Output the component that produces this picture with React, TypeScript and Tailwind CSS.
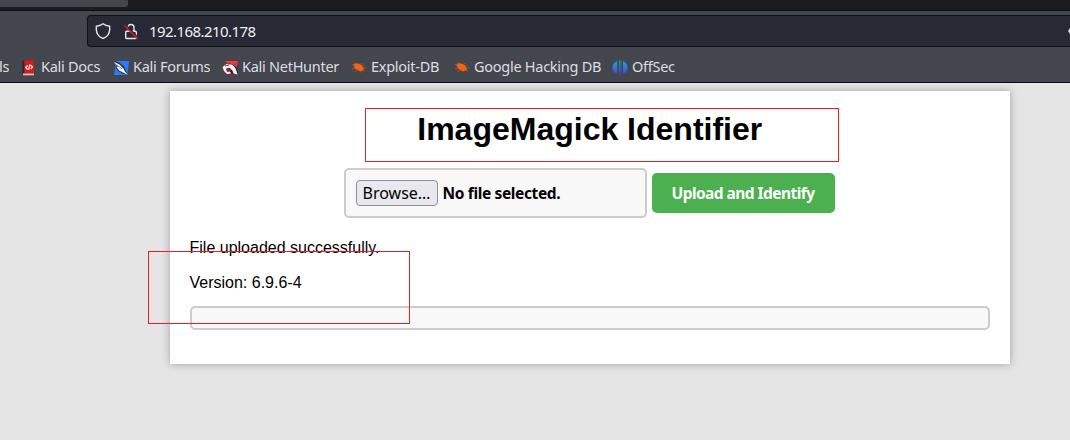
import type { ReactNode } from "react";

function Shield() {
  return (
    <svg className="block size-4" viewBox="0 0 16 16" fill="none" stroke="#e6e6ea" strokeWidth="1.4" strokeLinejoin="round">
      <path d="M8 .8C10 2.300 12.500 3 14.700 3.300V6.500C14.500 11 12 14 8 15.500C4 14 1.500 11 1.300 6.500V3.300C3.500 3 6 2.300 8 .8Z" />
    </svg>
  );
}

function InsecureLock() {
  return (
    <svg className="block h-[17px] w-4" viewBox="0 0 16 17" fill="none" stroke="#e6e6ea" strokeWidth="1.4">
      <path d="M5 5V4.500A3 3 0 0 1 11 4.500V8M3.700 8.200H12.300Q13.300 8.200 13.300 9.200V14.500Q13.300 15.500 12.300 15.500H3.700Q2.700 15.500 2.700 14.500V9.200Q2.700 8.200 3.700 8.200Z" />
      <path d="M2.500 1.500L15.500 15" stroke="#272935" strokeWidth="1.500" />
      <path d="M1.200 2.300L14.800 16.300" stroke="#e2123f" strokeWidth="1.400" />
    </svg>
  );
}

function DocsIcon() {
  return (
    <svg className="block size-4" viewBox="0 0 16 16">
      <path d="M2 .5H13V13.500H2Z" fill="#dc1717" />
      <path d="M1.300 .5H3.300V14H1.300Z" fill="#252940" />
      <path d="M2 13.500H13V15.300H2Z" fill="#ddbdb9" />
      <path d="M6.500 5.500L4.800 7.500L6.500 9.500M9.500 5L11.500 7L9.800 9M8.700 4.500L7.600 10" fill="none" stroke="#fff" strokeWidth="1.200" />
    </svg>
  );
}

function ForumsIcon() {
  return (
    <svg className="block size-4" viewBox="0 0 16 16">
      <path d="M3 1H16L14.500 15H1Z" fill="#267bff" />
      <path d="M0 .5L6 2.500L11 6.500L13 11L15.700 15.300L10 13.500L5 11L2.500 7L4 6Z" fill="#252a35" />
      <path d="M.5 1.500L6.500 4.500L10.500 8.500L12 11.500L15.200 15L10 12.500L6 10.500L3.500 7L5 6.500Z" fill="#f5f5f5" />
      <path d="M4 5L9 9" stroke="#555" strokeWidth=".7" />
    </svg>
  );
}

function HunterIcon() {
  return (
    <svg className="block size-4" viewBox="0 0 16 16">
      <path d="M3 1H16L13.500 13Z" fill="#f33339" />
      <path d="M.5 7L2.500 12L8 15H13L7 10Z" fill="#b31331" />
      <path d="M2.500 8Q6 4 9 5.500Q14 7 14.500 12Q11 13.500 8.500 10.500" fill="none" stroke="#22262b" strokeWidth="3" />
      <path d="M.5 7L4.500 4L9.500 4.500Q13 6 14.500 11L15.500 14.500L11.500 13.500Q10.500 10 8.500 8.500Q6 7 4 9L5 12L8 11.500L9 13.500L5 14L2 11Z" fill="#f4f4f4" />
      <path d="M3 6L7 5" stroke="#222" strokeWidth=".8" />
    </svg>
  );
}

function BugIcon() {
  return (
    <svg className="block size-4" viewBox="0 0 16 16">
      <path d="M2.300 4Q6 2.500 9 4.200Q13 6 12.700 9.500Q11 12 7.500 10.500Q3 9 2.300 4Z" fill="#f2640f" />
      <path d="M3.500 5L1 4.500M5 4L4.500 2.500M9 4.500L11.500 3.300M11.500 6L13.500 5M12.500 8H15.500M12 10L14 11.700M9 11L10 12.500M6 10L3.500 11.500M4 8L1 9" fill="none" stroke="#b5522f" strokeWidth=".8" />
    </svg>
  );
}

function OffSecIcon() {
  return (
    <svg className="block size-4" viewBox="0 0 16 16">
      <defs>
        <linearGradient id="offsec" x1="0" y1="0" x2="0" y2="16" gradientUnits="userSpaceOnUse">
          <stop stopColor="#16b0c8" />
          <stop offset=".5" stopColor="#3474d9" />
          <stop offset="1" stopColor="#6423c8" />
        </linearGradient>
      </defs>
      <path d="M5.200 1V14Q.5 12 .5 7.500Q.5 3 5.200 1ZM6.900 .5H7.700V15.500L6.900 15ZM8.500 .5H9.300V15L8.500 15.500ZM11 1Q15.500 3 15.500 7.500Q15.500 12 11 14Z" fill="url(#offsec)" />
    </svg>
  );
}

function Bookmark({ icon, children, className }: { icon: ReactNode; children: ReactNode; className: string }) {
  return (
    <div className={"flex shrink-0 items-center gap-1 whitespace-nowrap " + className}>
      {icon}
      <span className="-mt-0.5">{children}</span>
    </div>
  );
}

export default function App() {
  return (
    <div className="relative flex h-[440px] w-[1070px] flex-col overflow-hidden bg-[#e5e5e5] font-['Noto_Sans',sans-serif] text-black">
      <div className="h-[10px] shrink-0 bg-[#1b1b20]">
        <div className="h-[7px] w-32 rounded-br-[3px] bg-[#44464e]" />
      </div>
      <header className="flex h-[73px] shrink-0 flex-col border-y border-[#0d0e12] bg-[#44464e]">
        <div className="mt-1 ml-[87px] flex h-8 shrink-0 items-center rounded-l-[4px] border border-r-0 border-[#0e0f14] bg-[#272935] pl-[7px] text-[#f0f0f2]">
          <Shield />
          <div className="ml-3"><InsecureLock /></div>
          <span className="-mt-px ml-[10px] text-[15px] leading-5 tracking-[-0.56px]">192.168.210.178</span>
          <svg className="ml-auto block h-2 w-0.5" viewBox="0 0 2 8"><path d="M2 1L0 4L2 7Z" fill="#d8d8dc" /></svg>
        </div>
        <nav className="flex h-[39px] shrink-0 items-center pt-[3px] text-[14.500px] tracking-[-0.27px] text-[#dddde0]">
          <span className="-mt-0.5 w-[21px] shrink-0 -indent-px">ls</span>
          <Bookmark icon={<DocsIcon />} className="w-[92px]">Kali Docs</Bookmark>
          <Bookmark icon={<ForumsIcon />} className="w-[109px]">Kali Forums</Bookmark>
          <Bookmark icon={<HunterIcon />} className="w-[129px]">Kali NetHunter</Bookmark>
          <Bookmark icon={<BugIcon />} className="w-[103px]">Exploit-DB</Bookmark>
          <Bookmark icon={<BugIcon />} className="w-[158px]">Google Hacking DB</Bookmark>
          <Bookmark icon={<OffSecIcon />} className="w-20">OffSec</Bookmark>
        </nav>
      </header>
      <main className="mt-2 ml-[170px] flex h-[273px] w-[840px] shrink-0 flex-col bg-white pr-5 pl-[19.500px] shadow-[0_0_8px_rgba(0,0,0,0.3)]">
        <h1 className="mt-5 text-center font-['Liberation_Sans',sans-serif] text-[32px] leading-9 font-bold">ImageMagick Identifier</h1>
        <form className="mt-[21px] flex items-center justify-center gap-[5px] pr-[1.500px]" onSubmit={(e) => e.preventDefault()}>
          <div className="flex h-[50px] w-[303px] items-center gap-[5px] rounded-[5px] border-2 border-[#ccc] bg-[#f8f8f8] pl-[10px]">
            <button type="button" className="h-[26px] w-[82px] rounded-[4px] border border-[#8f8f9d] bg-[#e9e9ed] text-[16px] leading-6 whitespace-nowrap">Browse…</button>
            <span className="pt-0.5 text-[15.500px] font-bold tracking-[-0.36px] whitespace-nowrap">No file selected.</span>
          </div>
          <button className="h-10 w-[183px] rounded-[5px] bg-[#4caf50] pt-0.5 text-[15.500px] font-bold tracking-[-0.55px] whitespace-nowrap text-white">Upload and Identify</button>
        </form>
        <div className="font-['Liberation_Sans',sans-serif] text-[16px] leading-[18px]">
          <p className="mt-[21px]">File uploaded successfully.</p>
          <p className="mt-[17px]">Version: 6.9.6-4</p>
        </div>
        <div className="mt-[14px] ml-[0.500px] h-6 rounded-[5px] border-2 border-[#ccc] bg-[#f8f8f8]" />
      </main>
      <div className="pointer-events-none absolute top-[108px] left-[365px] h-[54px] w-[474px] border border-[#ed1c24]" />
      <div className="pointer-events-none absolute top-[251px] left-[148px] h-[73px] w-[262px] border border-[#ed1c24]" />
    </div>
  );
}
